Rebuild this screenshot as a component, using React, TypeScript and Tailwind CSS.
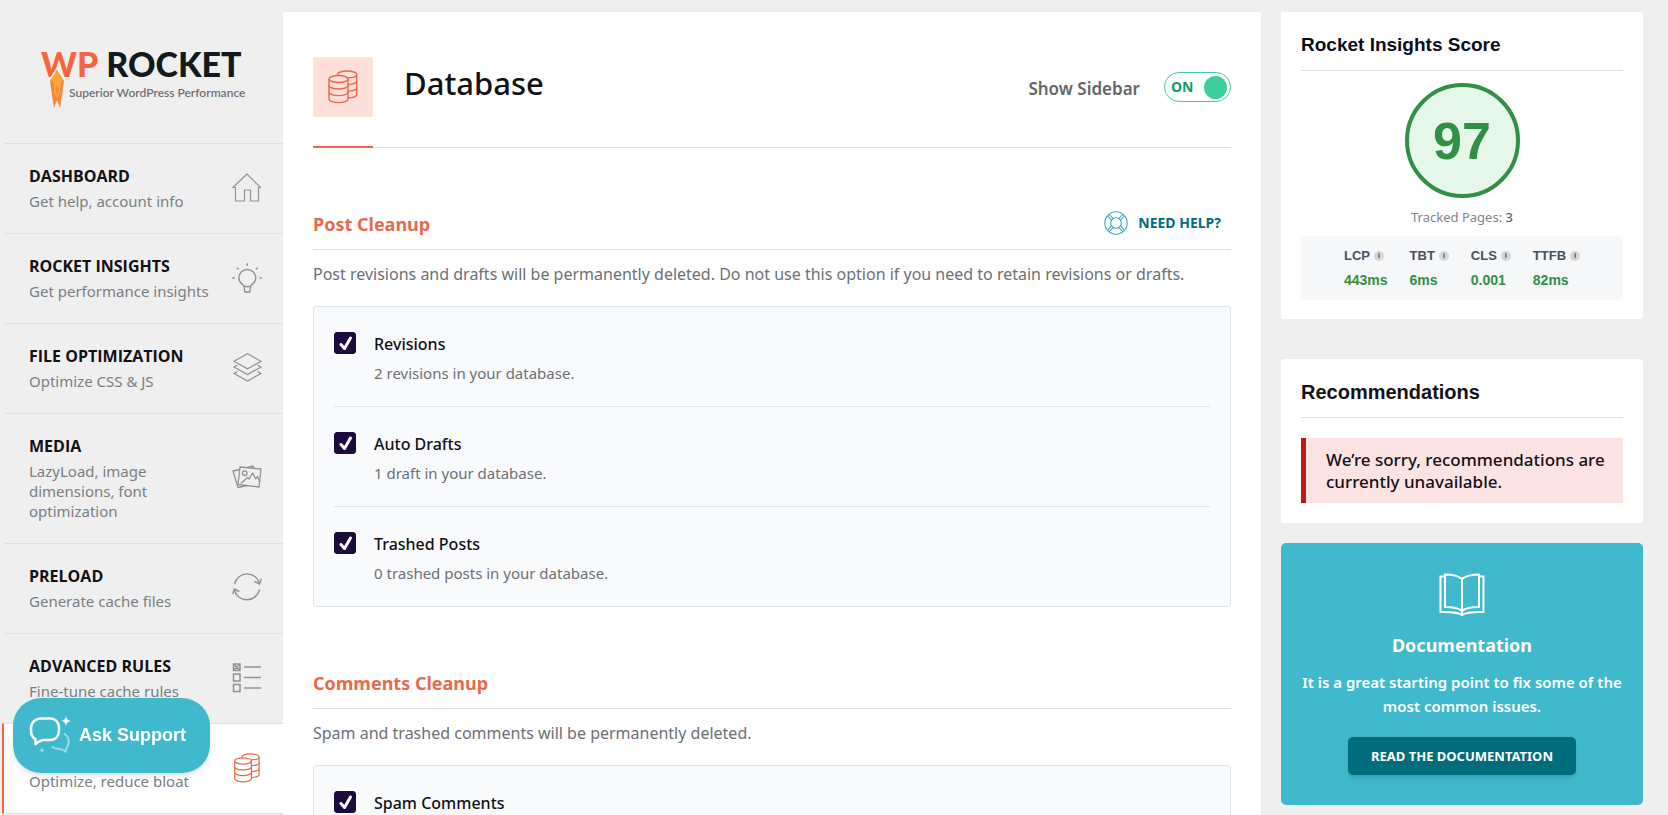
import React, { useState } from 'react';

const DatabaseIcon: React.FC<{ className?: string }> = ({ className }) => (
  <svg viewBox="0 0 30 34" fill="none" stroke="currentColor" strokeWidth="1.4" className={className} aria-hidden="true">
    <ellipse cx="10.5" cy="9" rx="9.5" ry="3.5" />
    <path d="M1 9v20c0 2 4.2 3.6 9.5 3.6S20 31 20 29V9" />
    <path d="M1 15.5C1 17.5 5.2 19 10.5 19s9.5-1.5 9.5-3.5M1 22c0 2 4.2 3.6 9.5 3.6S20 24 20 22" />
    <path d="M9.5 5.5V4.4C9.5 2.5 13.8 1 19 1s9.7 1.5 9.7 3.4v20c0 1.9-3.7 3.2-8.7 3.4" />
    <path d="M28.7 4.4c0 1.9-4 3.3-9 3.4M28.7 11c0 1.9-3.7 3.2-8.7 3.4M28.7 17.7c0 1.9-3.7 3.2-8.7 3.4" />
  </svg>
);

const HomeIcon = () => (
  <svg viewBox="0 0 30 30" fill="none" stroke="currentColor" strokeWidth="1.2" className="size-[30px]" aria-hidden="true">
    <path d="M3.5 14.5v13.5h9v-11h6v11h8v-13.5h2L15 1 .8 14.5z" strokeLinejoin="round" />
  </svg>
);

const BulbIcon = () => (
  <svg viewBox="0 0 30 30" fill="none" stroke="currentColor" strokeWidth="1.4" strokeLinecap="round" className="size-[30px]" aria-hidden="true">
    <path d="M12 23.5c0-2-5.2-3-5.2-8.5a8.5 8.5 0 0 1 17 0c0 5.5-5.2 6.5-5.2 8.5zM12 23.5l.8 5.5h5l.8-5.5" />
    <path d="M15.3.8v1.5M5.3 5l1 1M25.3 5l-1 1M.7 15h1.6M28 15h1.3" />
  </svg>
);

const LayersIcon = () => (
  <svg viewBox="0 0 30 30" fill="none" stroke="currentColor" strokeWidth="1.2" className="size-[30px]" aria-hidden="true">
    <path d="M15.5.8L29 8.3 15.5 15.8 2 8.3z" />
    <path d="M5.5 12L2 14l13.5 7.5L29 14l-3.5-2M5.5 18.5L2 20.5 15.5 28 29 20.5l-3.5-2" />
  </svg>
);

const MediaIcon = () => (
  <svg viewBox="0 0 30 30" fill="none" stroke="currentColor" strokeWidth="1.3" strokeLinejoin="round" className="size-[30px]" aria-hidden="true">
    <path d="M8 4l21 2-2 18-21-2.5z" />
    <path d="M7.5 6.5L1 8l5 16.5 9-1.8M15.500 4.500l5.500-1.500.8 2.300" />
    <circle cx="12.7" cy="10.2" r="2.3" />
    <path d="M9 20.500l6.500-6 1.700 1.500 3.500-6 3 6 1.700-2.500 2.300 5" />
  </svg>
);

const RefreshIcon = () => (
  <svg viewBox="0 0 30 30" fill="none" stroke="currentColor" strokeWidth="1.4" className="size-[30px]" aria-hidden="true">
    <path d="M2.5 11C4 5 9 .9 15 .9c6.3 0 11.5 4.2 12.5 10M27.7 16.5c-1.5 6-6.7 10.2-12.7 10.2-6.5 0-11.5-4-12.7-10.2" />
    <path d="M22.5 8.5l5 2.5 2-5.5M.8 21l1.5-5 5 2.5" />
  </svg>
);

const RulesIcon = () => (
  <svg viewBox="0 0 30 30" fill="none" stroke="currentColor" strokeWidth="1.5" className="size-[30px]" aria-hidden="true">
    <path d="M1.5 1H8v6.500H1.500zM1.500 11H8v7H1.500zM1.500 21.500H8v7H1.500zM1.500 1L8 7.500M8 1L1.500 7.500M12 4h17M12 14.500h17M12 25h17" />
  </svg>
);

const HelpIcon = () => (
  <svg viewBox="0 0 24 24" fill="none" stroke="#3fa9c0" strokeWidth="1.1" className="size-6" aria-hidden="true">
    <circle cx="12" cy="12" r="11.2" />
    <circle cx="12" cy="12" r="5.3" />
    <path d="M3.6 5.2l3.8 4M5.2 3.6l4 3.8M18.8 3.6l-4 3.8M20.4 5.2l-3.8 4M3.6 18.8l3.8-4M5.2 20.4l4-3.8M20.4 18.8l-3.8-4M18.8 20.4l-4-3.8" />
  </svg>
);

const BookIcon = () => (
  <svg viewBox="0 0 46 44" fill="none" stroke="currentColor" strokeWidth="2" className="h-11 w-[46px]" aria-hidden="true">
    <path d="M23 6C19 2.5 13 1.5 6 1.5V34c7 0 13 .5 17 4 4-3.5 10-4 17-4V1.5c-7 0-13 1-17 4.500zM23 6v37" />
    <path d="M6 3.5H1.5V39c8 0 16-.5 21.500 3 5.500-3.500 13.500-3 21.500-3V3.500H40" />
  </svg>
);

const ChatIcon = () => (
  <svg viewBox="0 0 42 38" fill="none" className="h-[38px] w-[42px]" aria-hidden="true">
    <path
      d="M12 2.5h9c5.500 0 9 4 9 9.500v2c0 6-3.500 10-9 10h-6c-3 0-6 2-8.500 4V23C3 21.500 2 18 2 14v-2c0-5.500 4.500-9.500 10-9.500z"
      stroke="#fff"
      strokeWidth="2.5"
      strokeLinejoin="round"
    />
    <path d="M35 17.5c5.500 3.500 6 9.500 3 13.500l-1.500 4.500c-2-1.500-4-2.500-6.500-2.500-3 0-5.500-1-7.500-2.500" stroke="#9fdbe6" strokeWidth="2" />
    <path d="M37 0q.5 4.500 5 5-4.500.5-5 5-.5-4.500-5-5 4.500-.5 5-5z" fill="#fff" />
    <path d="M13 31q.3 3 3.200 3.300-2.900.3-3.200 3.300-.3-3-3.200-3.300 2.900-.3 3.200-3.300z" fill="#9fdbe6" />
  </svg>
);

const menuItems = [
  { icon: <HomeIcon />, title: 'Dashboard', subtitle: 'Get help, account info' },
  { icon: <BulbIcon />, title: 'Rocket Insights', subtitle: 'Get performance insights' },
  { icon: <LayersIcon />, title: 'File Optimization', subtitle: 'Optimize CSS & JS' },
  { icon: <MediaIcon />, title: 'Media', subtitle: 'LazyLoad, image dimensions, font optimization' },
  { icon: <RefreshIcon />, title: 'Preload', subtitle: 'Generate cache files' },
  { icon: <RulesIcon />, title: 'Advanced Rules', subtitle: 'Fine-tune cache rules' },
  { icon: <DatabaseIcon className="h-[30px] w-[30px]" />, title: 'Database', subtitle: 'Optimize, reduce bloat', active: true }
];

const sections = [
  {
    title: 'Post Cleanup',
    help: true,
    description:
      'Post revisions and drafts will be permanently deleted. Do not use this option if you need to retain revisions or drafts.',
    options: [
      { id: 'revisions', label: 'Revisions', note: '2 revisions in your database.' },
      { id: 'auto-drafts', label: 'Auto Drafts', note: '1 draft in your database.' },
      { id: 'trashed-posts', label: 'Trashed Posts', note: '0 trashed posts in your database.' }
    ]
  },
  {
    title: 'Comments Cleanup',
    help: false,
    description: 'Spam and trashed comments will be permanently deleted.',
    options: [{ id: 'spam-comments', label: 'Spam Comments', note: '' }]
  }
];

const metrics = [
  { name: 'LCP', value: '443ms' },
  { name: 'TBT', value: '6ms' },
  { name: 'CLS', value: '0.001' },
  { name: 'TTFB', value: '82ms' }
];

const Logo = () => (
  <div className="flex h-[143px] flex-col pt-[42px] pl-[41px]">
    <div className="flex gap-2 font-['Lato',sans-serif] text-[34px] leading-[43px] font-black text-[#121a20]">
      <span className="text-[#f56640]">WP</span>
      <span>ROCKET</span>
    </div>
    <div className="flex gap-1 pl-2">
      <svg viewBox="0 0 16 42" className="-mt-[18px] h-[42px] w-4 shrink-0" aria-hidden="true">
        <path d="M.5 15L8 2l7.500 13" fill="none" stroke="#efefef" strokeWidth="2.5" />
        <path d="M8 3L1 14l2 14 2 13 3-8 3 8 2-13 2-14z" fill="#f5873f" />
        <path d="M8 3L2.500 13 5 18v8l3 5 3-5v-8l2.500-5z" fill="#faa43c" />
        <path d="M8 18l-2 4 2 6 2-6z" fill="#f68b3c" />
      </svg>
      <span className="font-['Lato',sans-serif] text-xs leading-4 font-semibold whitespace-nowrap text-[#6f7174]">
        Superior WordPress Performance
      </span>
    </div>
  </div>
);

const Option: React.FC<{ id: string; label: string; note: string }> = ({ id, label, note }) => {
  const [checked, setChecked] = useState(true);

  return (
    <div className="flex gap-[18px] border-t border-[#e0e4e9] pt-[25px] pb-[23px] first:border-t-0">
      <span className="relative size-[22px] shrink-0">
        <input
          id={id}
          type="checkbox"
          checked={checked}
          onChange={() => setChecked(!checked)}
          className="peer block size-[22px] appearance-none rounded-[3px] border border-[#1b0a3c] checked:bg-[#1b0a3c]"
        />
        <svg viewBox="0 0 22 22" className="pointer-events-none absolute inset-0 hidden peer-checked:block" aria-hidden="true">
          <path d="M7 12.5l3.500 4 6-10.500" fill="none" stroke="#fff" strokeWidth="3" strokeLinecap="round" strokeLinejoin="round" />
        </svg>
      </span>
      <div>
        <label htmlFor={id} className="block text-base leading-6 font-medium text-[#121116]">
          {label}
        </label>
        {note && <p className="mt-[7px] text-[15px] leading-5 text-[#6d7074]">{note}</p>}
      </div>
    </div>
  );
};

const App: React.FC = () => {
  const [sidebar, setSidebar] = useState(true);

  return (
    <div className="flex h-screen overflow-hidden bg-[#efefef] font-['Noto_Sans',sans-serif]">
      {/* Left menu */}
      <aside className="w-[283px] shrink-0">
        <Logo />
        <nav>
          {menuItems.map((item) => (
            <a
              key={item.title}
              href="#"
              className={
                item.active
                  ? 'ml-0.5 flex items-center justify-between border-t border-b border-l-2 border-[#e0e0e0] border-l-[#f56640] bg-white pt-5 pr-[21px] pb-[22px] pl-[25px] text-[#e9694c]'
                  : 'ml-1 flex items-center justify-between border-t border-[#e0e0e0] pt-5 pr-[21px] pb-[22px] pl-[25px] text-[#929292]'
              }
            >
              <div>
                <p className="font-['Open_Sans',sans-serif] text-base leading-6 font-bold text-[#121116] uppercase">{item.title}</p>
                <p className={item.title === 'Media' ? 'mt-[3px] max-w-36 text-[15px] leading-5 text-[#7b7e81]' : 'mt-[3px] text-[15px] leading-5 whitespace-nowrap text-[#7b7e81]'}>
                  {item.subtitle}
                </p>
              </div>
              {item.icon}
            </a>
          ))}
        </nav>
      </aside>

      {/* Content */}
      <main className="mt-3 min-w-0 flex-1 bg-white px-[30px] pt-[45px]">
        <header className="border-b border-[#e0e0e0]">
          <div className="flex items-start">
            <div className="flex size-[60px] items-center justify-center rounded-[3px] bg-[#fee0db]">
              <DatabaseIcon className="h-[34px] w-[30px] text-[#e9694c]" />
            </div>
            <h1 className="ml-[31px] text-[31px] leading-[52px] font-medium text-[#121116]">Database</h1>
            <label htmlFor="show-sidebar" className="mt-[18px] ml-auto text-[17px] leading-7 font-semibold text-[#666]">
              Show Sidebar
            </label>
            <div className="relative mt-[15px] ml-6 h-[30px] w-[67px]">
              <input
                id="show-sidebar"
                type="checkbox"
                role="switch"
                checked={sidebar}
                onChange={() => setSidebar(!sidebar)}
                className="block h-full w-full appearance-none rounded-full border border-[#3ecf9e] bg-white"
              />
              <span className="pointer-events-none absolute inset-0 flex items-center justify-between pr-1 pl-[7px] text-sm font-bold text-[#0e9f6e]">
                {sidebar ? 'ON' : 'OFF'}
                <span className="size-[23px] rounded-full bg-[#3ecf9e]"></span>
              </span>
            </div>
          </div>
          <div className="-mb-px mt-[29px] h-0.5 w-[60px] bg-[#e9694c]"></div>
        </header>

        {sections.map((section) => (
          <section key={section.title} className="pt-[60px]">
            <div className="flex h-[42px] items-start justify-between border-b border-[#e0e0e0]">
              <h2 className="text-lg leading-8 font-bold text-[#e9694c]">{section.title}</h2>
              {section.help && (
                <a href="#" className="mr-2.5 flex items-center gap-2.5 text-sm leading-[30px] font-bold text-[#006d7c]">
                  <HelpIcon />
                  NEED HELP?
                </a>
              )}
            </div>
            <p className="mt-3 text-base leading-6 text-[#6d7074]">{section.description}</p>
            <div className="mt-5 rounded-[3px] border border-[#e0e4e9] bg-[#f9fafc] px-5">
              {section.options.map((option) => (
                <Option key={option.id} {...option} />
              ))}
            </div>
          </section>
        ))}
      </main>

      {/* Right column */}
      {sidebar && (
        <aside className="mt-3 mr-[25px] ml-5 w-[362px] shrink-0">
          <div className="rounded-[3px] bg-white px-5 pt-5 pb-[19px]">
            <h3 className="border-b border-[#e0e0e0] pb-3 font-['Liberation_Sans',sans-serif] text-[19px] leading-[26px] font-bold text-[#0b0d1c]">
              Rocket Insights Score
            </h3>
            <div className="mx-auto mt-3 flex size-[115px] items-center justify-center rounded-full border-4 border-[#318f46] bg-[#e6f7ea] font-['Liberation_Sans',sans-serif] text-[52px] font-bold text-[#318f46]">
              97
            </div>
            <p className="mt-[7px] text-center text-[13px] leading-6 text-[#7d8590]">
              Tracked Pages: <span className="font-medium text-[#5b6470]">3</span>
            </p>
            <div className="mt-[7px] flex justify-center gap-[22px] rounded-md bg-[#f5f7f9] py-2 font-['Liberation_Sans',sans-serif] text-sm leading-6 font-bold">
              {metrics.map((metric) => (
                <div key={metric.name}>
                  <div className="flex items-center gap-1 text-[13px] leading-6 text-[#47505c]">
                    {metric.name}
                    <span className="flex size-2.5 items-center justify-center rounded-full bg-[#d5d8db] text-[8px]">i</span>
                  </div>
                  <div className="text-[#318f46]">{metric.value}</div>
                </div>
              ))}
            </div>
          </div>

          <div className="mt-10 rounded-[3px] bg-white p-5">
            <h3 className="border-b border-[#e0e0e0] pb-3 font-['Liberation_Sans',sans-serif] text-xl leading-[26px] font-bold text-[#121116]">
              Recommendations
            </h3>
            <p className="mt-5 border-l-[5px] border-[#b91c1c] bg-[#fbe3e4] pt-[11px] pr-3 pb-2.5 pl-5 text-[17px] leading-[22px] font-medium text-[#121116]">
              We’re sorry, recommendations are currently unavailable.
            </p>
          </div>

          <div className="mt-5 flex flex-col items-center rounded-[5px] bg-[#40b9cd] px-4 pt-[30px] pb-[30px] text-center text-white">
            <BookIcon />
            <h3 className="mt-4 text-lg leading-6 font-bold">Documentation</h3>
            <p className="mt-[13px] text-[15px] leading-6 font-semibold">
              It is a great starting point to fix some of the most common issues.
            </p>
            <a
              href="#"
              className="mt-[19px] rounded-[5px] bg-[#006d7c] px-[23px] text-[13px] leading-[38px] font-bold shadow-md"
            >
              READ THE DOCUMENTATION
            </a>
          </div>
        </aside>
      )}

      <button
        type="button"
        className="fixed bottom-[42px] left-[13px] flex h-[75px] w-[197px] items-center gap-2 rounded-[28px] bg-[#40b9cd] pb-0.5 pl-4 font-['Liberation_Sans',sans-serif] text-lg font-bold text-white shadow-md"
      >
        <ChatIcon />
        Ask Support
      </button>
    </div>
  );
};

export default App;
